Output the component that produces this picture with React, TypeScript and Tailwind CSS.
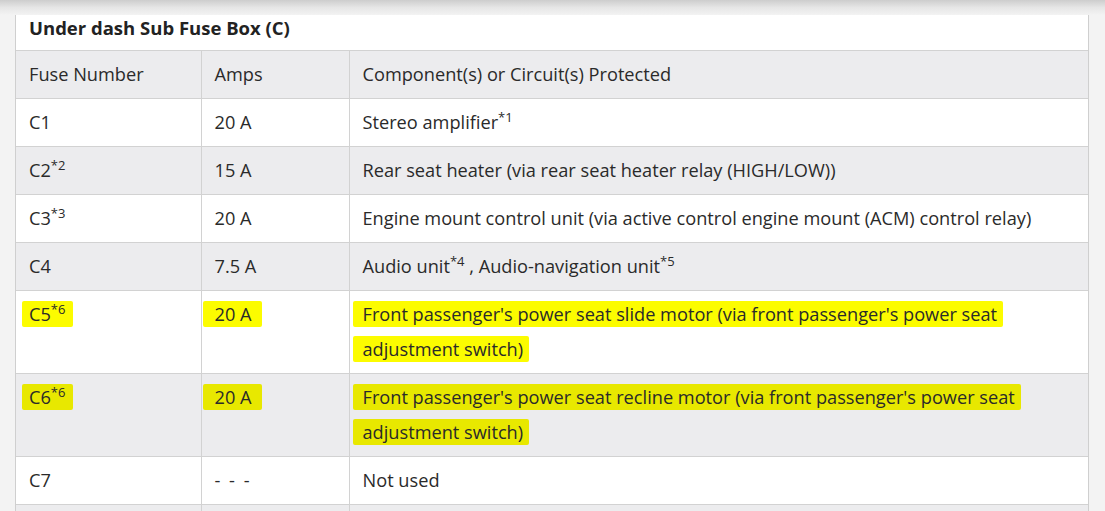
import React from "react";

type Row = {
  fuse: string;
  fuseSup?: string;
  amps: string;
  desc: React.ReactNode;
  marked?: boolean;
};

const Sup = ({ children }: { children: React.ReactNode }) => (
  <span className="relative -top-[7px] text-[13px] leading-none">{children}</span>
);

const Mark = ({ children, gray, className = "" }: { children: React.ReactNode; gray?: boolean; className?: string }) => (
  <span
    className={`${gray ? "bg-[#e8e800]" : "bg-[#fcfc00]"} box-decoration-clone rounded-[2px] py-[1px] ${className}`}
  >
    {children}
  </span>
);

const rows: Row[] = [
  { fuse: "C1", amps: "20 A", desc: <>Stereo amplifier<Sup>*1</Sup></> },
  { fuse: "C2", fuseSup: "*2", amps: "15 A", desc: "Rear seat heater (via rear seat heater relay (HIGH/LOW))" },
  { fuse: "C3", fuseSup: "*3", amps: "20 A", desc: "Engine mount control unit (via active control engine mount (ACM) control relay)" },
  { fuse: "C4", amps: "7.5 A", desc: <>Audio unit<Sup>*4</Sup> , Audio-navigation unit<Sup>*5</Sup></> },
  { fuse: "C5", fuseSup: "*6", amps: "20 A", marked: true, desc: "slide" },
  { fuse: "C6", fuseSup: "*6", amps: "20 A", marked: true, desc: "recline" },
  { fuse: "C7", amps: "- - -", desc: "Not used" },
];

const cell = "border-t border-[#d2d2d2] px-[13px] py-[6px] leading-[35px]";

export default function App() {
  return (
    <div
      className="h-[511px] w-[1105px] overflow-hidden bg-[#f3f3f3] text-[#2a2a2a]"
      style={{ fontFamily: '"Open Sans", "Noto Sans", sans-serif' }}
    >
      <div className="h-[15px] bg-gradient-to-b from-[#cdcdcd] via-[#e6e6e6] to-[#f3f3f3]" />
      <div className="ml-[15px] w-[1074px] border-x border-[#cfcfcf] bg-white">
        <div className="h-[35px] px-[13px] pt-[1px] text-[18.5px] font-bold leading-[24px] text-[#222]">
          Under dash Sub Fuse Box (C)
        </div>
        <table className="w-full border-collapse text-[18.2px]">
          <tbody>
            <tr className="bg-[#ececee]">
              <td className={`w-[185px] ${cell}`}>Fuse Number</td>
              <td className={`w-[148px] border-x ${cell}`}>Amps</td>
              <td className={cell}>Component(s) or Circuit(s) Protected</td>
            </tr>
            {rows.map((r, i) => {
              const gray = i % 2 === 1;
              const bg = gray ? "bg-[#ececee]" : "bg-white";
              const fuse = (
                <>
                  {r.fuse}
                  {r.fuseSup && <Sup>{r.fuseSup}</Sup>}
                </>
              );
              return (
                <tr key={r.fuse} className={bg}>
                  <td className={`align-top ${cell}`}>
                    {r.marked ? (
                      <Mark gray={gray} className="-ml-[7px] pl-[7px] pr-[8px]">{fuse}</Mark>
                    ) : (
                      fuse
                    )}
                  </td>
                  <td className={`align-top border-x ${cell}`}>
                    {r.marked ? (
                      <Mark gray={gray} className="-ml-[12px] pl-[12px] pr-[10px]">{r.amps}</Mark>
                    ) : r.amps === "- - -" ? (
                      <span className="tracking-[2px]">{r.amps}</span>
                    ) : (
                      r.amps
                    )}
                  </td>
                  <td className={`align-top ${cell}`}>
                    {r.marked ? (
                      <Mark gray={gray} className="-ml-[10px] pl-[10px] pr-[6px]">
                        Front passenger's power seat {r.desc} motor (via front passenger's power seat
                        <br />
                        adjustment switch)
                      </Mark>
                    ) : (
                      r.desc
                    )}
                  </td>
                </tr>
              );
            })}
            <tr className="bg-[#ececee]">
              <td className={cell}>&nbsp;</td>
              <td className={`border-x ${cell}`}>&nbsp;</td>
              <td className={cell}>&nbsp;</td>
            </tr>
          </tbody>
        </table>
      </div>
    </div>
  );
}
